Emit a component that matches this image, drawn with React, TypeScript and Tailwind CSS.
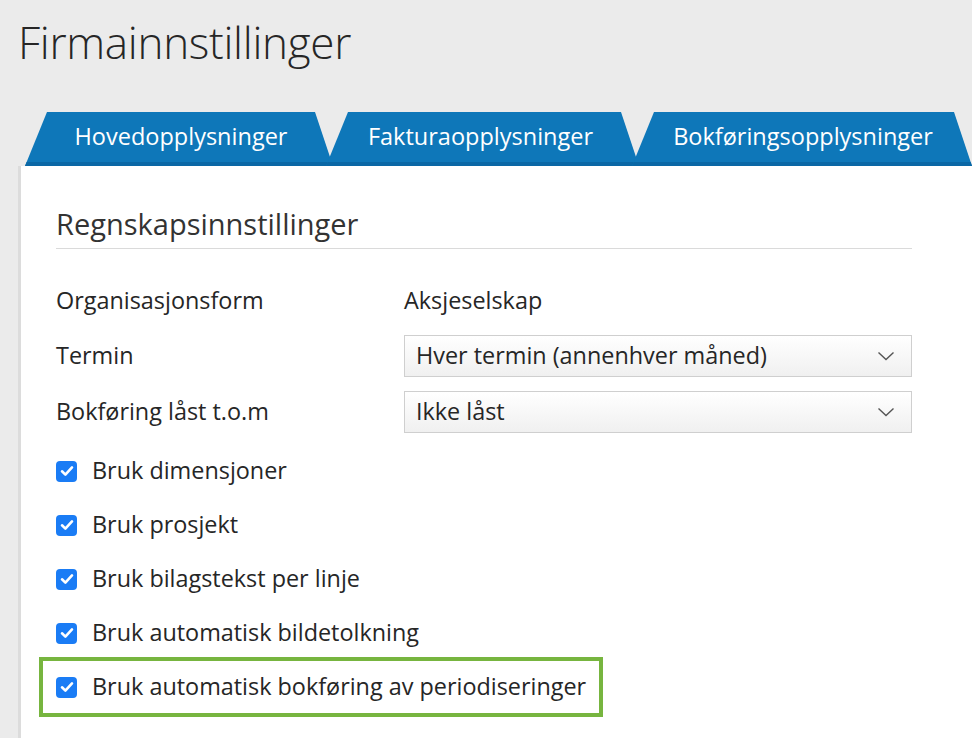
import React from 'react'

const tabs = ['Hovedopplysninger', 'Fakturaopplysninger', 'Bokføringsopplysninger']

const checks = [
  'Bruk dimensjoner',
  'Bruk prosjekt',
  'Bruk bilagstekst per linje',
  'Bruk automatisk bildetolkning',
]

function Chevron() {
  return (
    <svg width="18" height="10" viewBox="0 0 18 10" fill="none" className="shrink-0">
      <path d="M1.5 1.5 L9 8.5 L16.5 1.5" stroke="#555" strokeWidth="1.4" />
    </svg>
  )
}

function Check() {
  return (
    <span className="flex w-[21px] h-[21px] shrink-0 items-center justify-center rounded-[4px] bg-[#1a7cf5]">
      <svg width="14" height="12" viewBox="0 0 14 12" fill="none">
        <path d="M2 6.3 L5.4 9.6 L12 2.4" stroke="white" strokeWidth="2.6" strokeLinecap="round" strokeLinejoin="round" />
      </svg>
    </span>
  )
}

function Select({ value }: { value: string }) {
  return (
    <div className="flex h-[42px] w-[508px] items-center justify-between border border-[#cfcfcf] bg-gradient-to-b from-white to-[#f0f0f0] pl-[11px] pr-[16px]">
      <span>{value}</span>
      <Chevron />
    </div>
  )
}

export default function App() {
  return (
    <div className="h-[738px] w-[972px] overflow-hidden bg-[#ebebeb] text-[#262626]" style={{ fontFamily: '"Open Sans", sans-serif' }}>
      <h1 className="pl-[18px] pt-[14px] text-[44px] font-light leading-[56px] tracking-[-0.3px]">Firmainnstillinger</h1>

      {/* faner */}
      <div className="mt-[42px] flex h-[54px] items-end pl-[25px]">
        {tabs.map((t, i) => (
          <div
            key={t}
            className={`relative flex h-[54px] items-center justify-center bg-[#0e77b9] pb-[5px] text-[23.5px] text-white ${i === 0 ? 'w-[308px]' : i === 1 ? 'w-[313px]' : 'w-[340px]'} ${i > 0 ? '-ml-[7px]' : ''}`}
            style={{
              clipPath: 'polygon(22px 0, calc(100% - 18px) 0, 100% 100%, 0 100%)',
              borderRadius: '6px 6px 0 0',
              boxShadow: 'inset 0 -4px 0 #0a67a5',
            }}
          >
            <span className={i === 0 ? 'pl-[4px]' : i === 1 ? '-ml-[4px]' : 'pl-[2px]'}>{t}</span>
          </div>
        ))}
      </div>

      {/* panel */}
      <div className="ml-[18px] h-[600px] border-l-[3px] border-[#dcdcdc] bg-white pl-[35px] pt-[40px] text-[23.4px]">
        <h2 className="w-[856px] border-b border-[#dadada] pb-[6px] text-[29px] leading-[36px] text-[#333]">Regnskapsinnstillinger</h2>

        <div className="mt-[34px] flex items-center h-[36px]">
          <span className="w-[348px]">Organisasjonsform</span>
          <span>Aksjeselskap</span>
        </div>

        <div className="mt-[16px] flex items-center">
          <span className="w-[348px]">Termin</span>
          <Select value="Hver termin (annenhver måned)" />
        </div>

        <div className="mt-[14px] flex items-center">
          <span className="w-[348px]">Bokføring låst t.o.m</span>
          <Select value="Ikke låst" />
        </div>

        <div className="mt-[11px] flex flex-col">
          {checks.map((c) => (
            <label key={c} className="flex h-[54px] items-center gap-[15px]">
              <Check />
              <span>{c}</span>
            </label>
          ))}
        </div>

        <div className="-ml-[17px] -mt-[3px] flex h-[60px] w-[564px] items-center gap-[15px] border-[4px] border-[#77b53f] pl-[13px]">
          <Check />
          <span>Bruk automatisk bokføring av periodiseringer</span>
        </div>
      </div>
    </div>
  )
}
